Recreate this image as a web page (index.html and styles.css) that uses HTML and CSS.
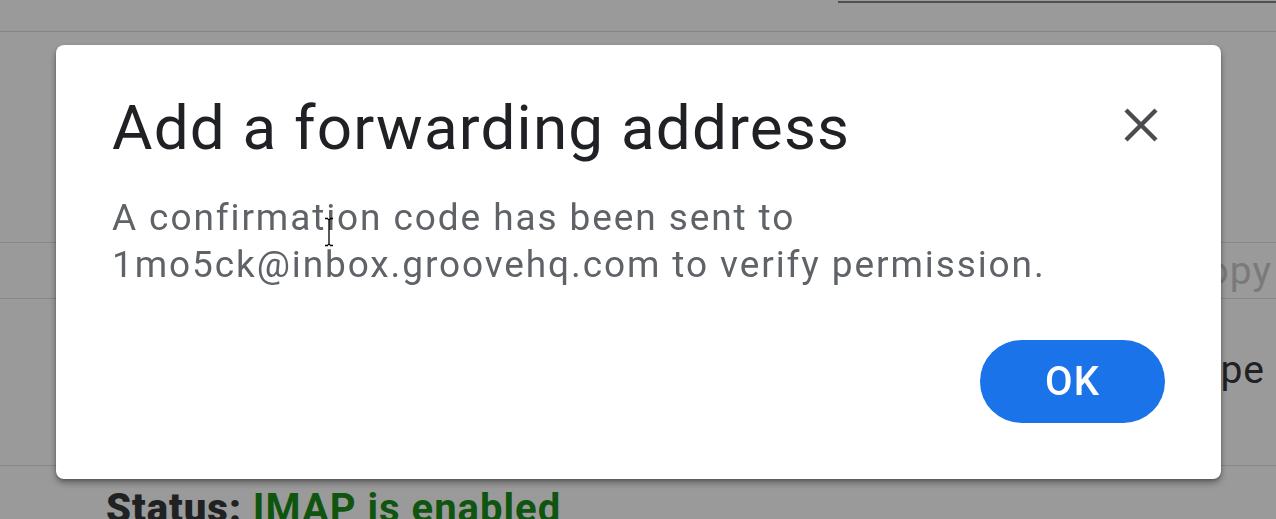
FILE: index.html
```html
<!DOCTYPE html>
<html>
<head>
<meta charset="utf-8">
<link rel="stylesheet" href="styles.css">
</head>
<body>
<div class="page">
  <div class="topbar"><div class="topline"></div></div>
  <div class="content">
    <div class="row-field"><span class="placeholder">Copy</span></div>
    <div class="row-text"><span>Type</span></div>
    <div class="divider"></div>
    <div class="status"><b>Status:</b> <span class="ok">IMAP is enabled</span></div>
  </div>
</div>
<div class="scrim"></div>
<div class="dialog" role="dialog">
  <div class="dlg-head">
    <h1 class="dlg-title">Add a forwarding address</h1>
    <button class="dlg-close" aria-label="Close">
      <svg width="40" height="40" viewBox="0 0 40 40"><path d="M5 5 L35 35 M35 5 L5 35" stroke="#4a4c4f" stroke-width="4.4" fill="none"/></svg>
    </button>
  </div>
  <p class="dlg-body">A confirmation code has been sent to<br>1mo5ck@inbox.groovehq.com to verify permission.</p>
  <div class="dlg-actions"><button class="btn-ok">OK</button></div>
</div>
<svg class="cursor" width="10" height="30" viewBox="0 0 10 30"><path d="M1 1.5 H4 M6 1.5 H9 M5 2 V28 M1 28.5 H4 M6 28.5 H9 M4 2 L5 3 L6 2 M4 28 L5 27 L6 28" stroke="#000" stroke-width="1.3" fill="none"/></svg>
</body>
</html>
```
FILE: styles.css
```css
* { box-sizing: border-box; }
html, body { margin: 0; padding: 0; }
body {
  width: 1276px;
  height: 519px;
  overflow: hidden;
  background: #fff;
  font-family: Roboto, "Liberation Sans", sans-serif;
  color: #202124;
}
.page { width: 1276px; }
.topbar {
  height: 32px;
  border-bottom: 1px solid #d8d8d8;
  display: flex;
  justify-content: flex-end;
}
.topline { width: 438px; height: 2px; margin-top: 1px; background: #777; }
.content { display: flex; flex-direction: column; }
.row-field {
  margin-top: 210px;
  height: 57px;
  border-top: 1px solid #dadce0;
  border-bottom: 1px solid #dadce0;
  display: flex;
  justify-content: flex-end;
  align-items: center;
  padding-right: 4px;
  font-size: 39px;
  letter-spacing: 1px;
  color: #c4c4c4;
}
.row-text {
  height: 166px;
  display: flex;
  justify-content: flex-end;
  padding-top: 48px;
  padding-right: 11px;
  font-size: 39px;
  letter-spacing: 1px;
  color: #202124;
}
.divider { height: 1px; background: #dadce0; }
.status {
  padding-left: 106px;
  padding-top: 19px;
  font-size: 40px;
  letter-spacing: 1px;
  font-weight: 700;
  color: #202124;
  white-space: nowrap;
}
.status .ok { color: #008000; }
.scrim {
  position: fixed;
  inset: 0;
  background: rgba(32, 33, 36, 0.453);
}
.dialog {
  position: absolute;
  left: 56px;
  top: 45px;
  width: 1165px;
  height: 434px;
  background: #fff;
  border-radius: 8px;
  box-shadow: 0 4px 6px rgba(0,0,0,0.35), 0 1px 3px rgba(0,0,0,0.2);
  padding: 47px 56px 56px 56px;
  display: flex;
  flex-direction: column;
}
.dlg-head { display: flex; justify-content: space-between; align-items: flex-start; }
.dlg-title {
  margin: 0;
  font-size: 62px;
  line-height: 72px;
  letter-spacing: 1.2px;
  font-weight: 400;
  color: #202124;
}
.dlg-close {
  border: 0;
  background: none;
  padding: 0;
  margin: 13px 4px 0 0;
  width: 40px;
  height: 40px;
  display: flex;
}
.dlg-body {
  margin: 30px 0 0 0;
  font-size: 37px;
  line-height: 47px;
  letter-spacing: 1.9px;
  color: #5f6368;
}
.dlg-actions { margin-top: auto; display: flex; justify-content: flex-end; }
.btn-ok {
  width: 185px;
  height: 83px;
  border: 0;
  border-radius: 42px;
  background: #1a73e8;
  color: #fff;
  font-family: Roboto, "Liberation Sans", sans-serif;
  font-size: 40px;
  font-weight: 500;
  letter-spacing: 1px;
}
.cursor { position: absolute; left: 324px; top: 217px; }
```
